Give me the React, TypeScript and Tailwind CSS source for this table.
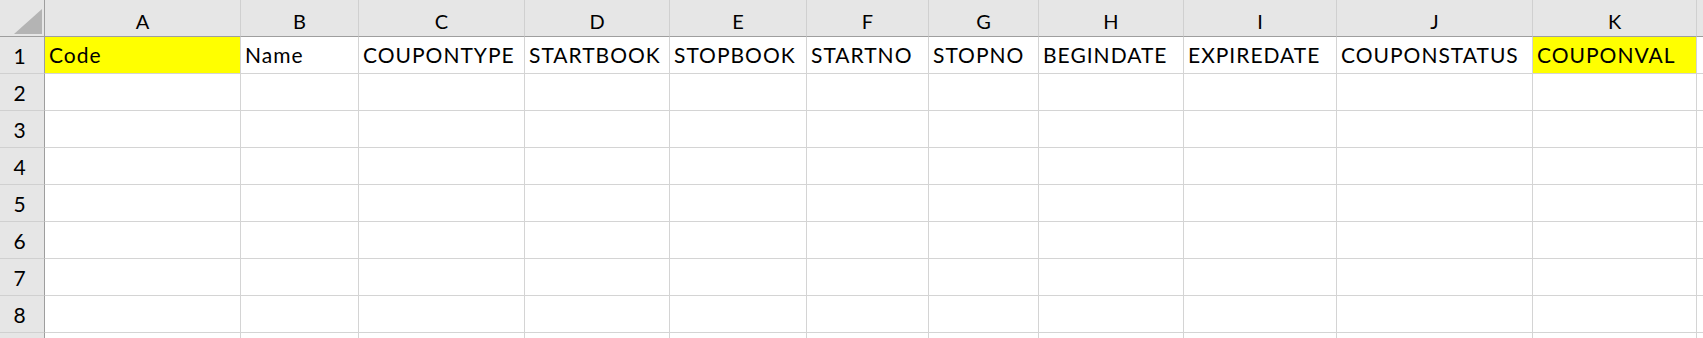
const columns = ["A", "B", "C", "D", "E", "F", "G", "H", "I", "J", "K"];

const headerRow = [
  { text: "Code", fill: true },
  { text: "Name" },
  { text: "COUPONTYPE" },
  { text: "STARTBOOK" },
  { text: "STOPBOOK" },
  { text: "STARTNO" },
  { text: "STOPNO" },
  { text: "BEGINDATE" },
  { text: "EXPIREDATE" },
  { text: "COUPONSTATUS" },
  { text: "COUPONVAL", fill: true },
];

const emptyRows = [2, 3, 4, 5, 6, 7, 8];

const rowHead =
  "flex items-end justify-center border-r border-b border-r-[#9e9e9e] border-b-[#d0d0d0] bg-[#e6e6e6] pr-[5px] pb-[7px] text-[21px] leading-none";

export default function App() {
  return (
    <div
      className="h-[338px] w-[1703px] overflow-hidden bg-white text-black"
      style={{ fontFamily: "Lato, 'Open Sans', sans-serif" }}
    >
      <div className="grid grid-cols-[45px_196px_118px_166px_145px_137px_122px_110px_145px_153px_196px_164px_1fr] auto-rows-[37px]">
        {/* select-all corner */}
        <div className="relative border-r border-b border-r-[#9e9e9e] border-b-[#9e9e9e] bg-[#e6e6e6]">
          <svg className="absolute left-[14px] top-[9px]" width={28} height={25} viewBox="0 0 28 25">
            <polygon points="0,25 28,0 28,25" fill="#b4b4b4" />
          </svg>
        </div>

        {/* column letters */}
        {columns.map((c) => (
          <div
            key={c}
            className="flex items-end justify-center border-r border-b border-r-[#d0d0d0] border-b-[#9e9e9e] bg-[#e6e6e6] pb-[5px] text-[20px] leading-none"
          >
            {c}
          </div>
        ))}
        <div className="border-b border-b-[#9e9e9e] bg-[#e6e6e6]" />

        {/* row 1 with field names */}
        <div className={rowHead}>1</div>
        {headerRow.map((cell) => (
          <div
            key={cell.text}
            className={`flex items-end whitespace-nowrap border-r border-b border-[#d4d4d4] pl-[4px] pb-[8px] text-[21px] leading-none tracking-[1px] ${
              cell.fill ? "bg-[#ffff00]" : "bg-white"
            }`}
          >
            {cell.text}
          </div>
        ))}
        <div className="border-b border-[#d4d4d4]" />

        {/* blank rows */}
        {emptyRows.map((r) => (
          <div key={r} className="contents">
            <div className={rowHead}>{r}</div>
            {columns.map((c) => (
              <div key={c} className="border-r border-b border-[#d4d4d4]" />
            ))}
            <div className="border-b border-[#d4d4d4]" />
          </div>
        ))}

        {/* row 9, mostly below the fold */}
        <div className="border-r border-r-[#9e9e9e] bg-[#e6e6e6]" />
        {columns.map((c) => (
          <div key={c} className="border-r border-[#d4d4d4]" />
        ))}
        <div />
      </div>
    </div>
  );
}
